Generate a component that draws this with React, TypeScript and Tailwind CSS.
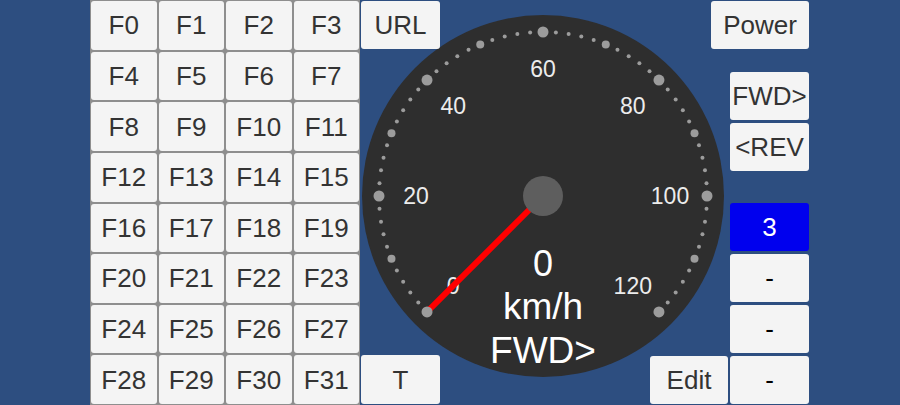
import React from 'react';

const base =
  'flex items-center justify-center rounded-[3px] text-[26px] leading-none';
const btn = `${base} bg-[#f4f4f4] text-[#333333]`;
const font = '"Liberation Sans", Arial, sans-serif';

function Gauge() {
  const cx = 183;
  const cy = 196;
  const pt = (v: number, r: number) => {
    const a = ((225 - 2.25 * v) * Math.PI) / 180;
    return { x: cx + r * Math.cos(a), y: cy - r * Math.sin(a) };
  };
  const dots = [];
  for (let v = 0; v <= 120; v += 2) {
    const p = pt(v, 164);
    const r = v % 20 === 0 ? 5.5 : v % 10 === 0 ? 4 : 2;
    dots.push(<circle key={v} cx={p.x} cy={p.y} r={r} fill="#9c9c9c" />);
  }
  const labels = [0, 20, 40, 60, 80, 100, 120].map((v) => {
    const p = pt(v, 127);
    return (
      <text
        key={v}
        x={p.x}
        y={p.y}
        textAnchor="middle"
        dominantBaseline="central"
        fill="#ececec"
        fontSize="23"
        fontFamily={font}
      >
        {v}
      </text>
    );
  });
  const tip = pt(0, 164);
  return (
    <svg width="369" height="405" viewBox="0 0 369 405" className="col-start-1 row-start-1">
      <circle cx={cx} cy={cy} r={181} fill="#2e2e2e" />
      {labels}
      <line x1={cx} y1={cy} x2={tip.x} y2={tip.y} stroke="#ff0000" strokeWidth="6" />
      {dots}
      <circle cx={cx} cy={cy} r={20} fill="#5e5e5e" />
      <g fontFamily={font} fill="#ffffff" textAnchor="middle">
        <text x={cx} y={263} fontSize="36" dominantBaseline="central">0</text>
        <text x={cx} y={306} fontSize="37" dominantBaseline="central">km/h</text>
        <text x={cx} y={350} fontSize="37" dominantBaseline="central">FWD&gt;</text>
      </g>
    </svg>
  );
}

export default function App() {
  const fkeys = Array.from({ length: 32 }, (_, i) => `F${i}`);
  return (
    <div
      className="flex h-[405px] w-[900px] bg-[#2d4e80] pl-[90px] overflow-hidden"
      style={{ fontFamily: font }}
    >
      <div className="grid w-[270px] h-[405px] grid-cols-4 grid-rows-8 gap-[2px] bg-[#8e8e8e] p-[1px]">
        {fkeys.map((k) => (
          <div key={k} className={btn}>
            {k}
          </div>
        ))}
      </div>

      <div className="grid w-[369px] h-[405px]">
        <Gauge />
        <div className="col-start-1 row-start-1 flex flex-col justify-between p-[1px]">
          <div className={`${btn} w-[79px] h-[48px]`}>URL</div>
          <div className="flex justify-between items-end">
            <div className={`${btn} w-[79px] h-[49px]`}>T</div>
            <div className={`${btn} w-[78px] h-[48px]`}>Edit</div>
          </div>
        </div>
      </div>

      <div className="flex flex-col w-[81px] h-[405px] pt-[1px] px-[1px]">
        <div className={`${btn} w-[98px] h-[48px] self-end`}>Power</div>
        <div className={`${btn} h-[48px] mt-[23px]`}>FWD&gt;</div>
        <div className={`${btn} h-[48px] mt-[3px]`}>&lt;REV</div>
        <div className={`${base} h-[48px] mt-[32px] bg-[#0000ee] text-white`}>3</div>
        <div className={`${base} bg-[#f4f4f4] text-black h-[48px] mt-[3px]`}>-</div>
        <div className={`${base} bg-[#f4f4f4] text-black h-[48px] mt-[3px]`}>-</div>
        <div className={`${base} bg-[#f4f4f4] text-black h-[48px] mt-[3px]`}>-</div>
      </div>
    </div>
  );
}
